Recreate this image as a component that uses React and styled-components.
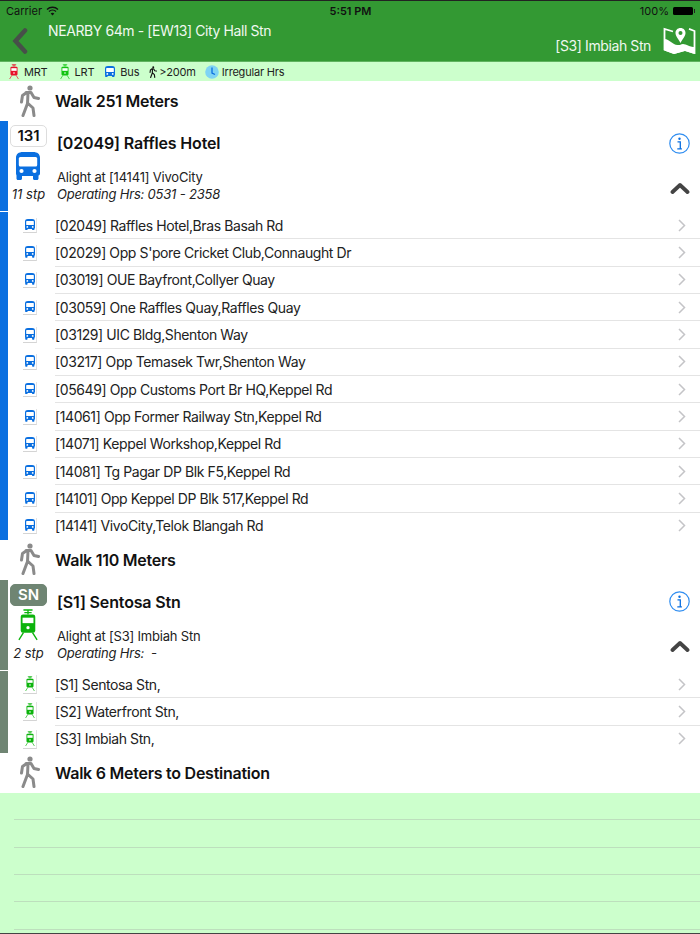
import React from 'react'
import styled, { createGlobalStyle } from 'styled-components'

const FONT = `Inter, "Liberation Sans", sans-serif`

const busStops = [
  '[02049] Raffles Hotel,Bras Basah Rd',
  "[02029] Opp S'pore Cricket Club,Connaught Dr",
  '[03019] OUE Bayfront,Collyer Quay',
  '[03059] One Raffles Quay,Raffles Quay',
  '[03129] UIC Bldg,Shenton Way',
  '[03217] Opp Temasek Twr,Shenton Way',
  '[05649] Opp Customs Port Br HQ,Keppel Rd',
  '[14061] Opp Former Railway Stn,Keppel Rd',
  '[14071] Keppel Workshop,Keppel Rd',
  '[14081] Tg Pagar DP Blk F5,Keppel Rd',
  '[14101] Opp Keppel DP Blk 517,Keppel Rd',
  '[14141] VivoCity,Telok Blangah Rd',
]

const trainStops = ['[S1] Sentosa Stn,', '[S2] Waterfront Stn,', '[S3] Imbiah Stn,']

const BusIcon = ({ size = 14, color = '#0a6fe0' }) => (
  <svg width={size} height={(size * 28) / 24} viewBox="0 0 24 28" fill="none">
    <path
      fill={color}
      d="M7 0h10c4.500 0 7 2 7 6v15.500c0 1-.6 1.800-1.500 2V26.500c0 .8-.6 1.500-1.500 1.500h-2.500c-.9 0-1.500-.7-1.500-1.500V24H6v2.500c0 .8-.6 1.500-1.500 1.500H2c-.9 0-1.500-.7-1.500-1.500V23.500C.600 23.300 0 22.500 0 21.500V6C0 2 2.500 0 7 0z"
    />
    <rect x="2.800" y="5" width="18.400" height="9.500" rx="1.500" fill="#fff" />
    <circle cx="5.500" cy="19" r="2.100" fill="#fff" />
    <circle cx="18.500" cy="19" r="2.100" fill="#fff" />
  </svg>
)

const TrainIcon = ({ width = 20, height = 33, color = '#0cb30c' }) => (
  <svg width={width} height={height} viewBox="0 0 22 34" fill="none">
    <path d="M6 1h10M11 1v5M7 4h8" stroke={color} strokeWidth="1.5" />
    <rect x="3" y="6" width="16" height="20" rx="2.5" fill={color} />
    <rect x="5" y="9.5" width="12" height="6" fill="#fff" />
    <circle cx="11" cy="20.5" r="1.8" fill="#fff" />
    <path d="M6 26L1 34M16 26l5 8" stroke={color} strokeWidth="1.5" />
  </svg>
)

const WalkIcon = ({ size = 32, color = '#8a8a8a' }) => (
  <svg width={size * 0.75} height={size} viewBox="0 0 24 32" fill="none">
    <circle cx="14" cy="3" r="2.6" fill={color} />
    <path
      d="M10 7.500h5l3 5 4.500 1M10 8L6.500 10.500 5.500 17M12 8l-.5 10.500L7 30.500M11.500 18l5.500 5 1 7.500"
      stroke={color}
      strokeWidth="3"
      strokeLinecap="round"
      strokeLinejoin="round"
    />
  </svg>
)

const InfoIcon = () => (
  <svg width="21" height="21" viewBox="0 0 21 21" fill="none">
    <circle cx="10.5" cy="10.5" r="9.7" stroke="#2f8df0" strokeWidth="1.2" />
    <circle cx="10.5" cy="5.8" r="1.2" fill="#0a6fe0" />
    <path d="M8.5 8.800h2.800v6.700M8.300 15.800h4.600" stroke="#0a6fe0" strokeWidth="1.3" />
  </svg>
)

const Chevron = () => (
  <svg width="8" height="13" viewBox="0 0 8 13" fill="none">
    <path d="M1 1l5.500 5.500L1 12" stroke="#c4c4c7" strokeWidth="1.5" />
  </svg>
)

const CollapseArrow = () => (
  <svg width="20" height="12" viewBox="0 0 20 12" fill="none">
    <path d="M2.500 10l7.500-7 7.500 7" stroke="#444" strokeWidth="3.8" strokeLinecap="round" strokeLinejoin="round" />
  </svg>
)

const BackArrow = () => (
  <svg width="16" height="26" viewBox="0 0 16 26" fill="none">
    <path d="M13 2.500L3.500 13 13 23.500" stroke="#474f49" strokeWidth="4.5" strokeLinecap="round" />
  </svg>
)

const MapIcon = () => (
  <svg width="33" height="27" viewBox="0 0 33 27" fill="none">
    <path d="M10 4.500L1.500 2v20.500l9.500 3.500 11-3 9.500 3V4l-5.500-2.200" stroke="#fff" strokeWidth="1.8" />
    <path d="M1.500 12c5 0 8 6 13 6s4-2 8-.5 5 2.500 9 2.500v7l-9.500-3-11 3-9.500-3.500z" fill="#fff" />
    <path d="M17.500 1c-3 0-5 2.200-5 5 0 3 3.500 7 5 10 1.500-3 5-7 5-10 0-2.800-2-5-5-5z" fill="#fff" />
    <circle cx="17.500" cy="6" r="2" fill="#339933" />
  </svg>
)

const WifiIcon = () => (
  <svg width="13" height="10" viewBox="0 0 13 10" fill="none">
    <path d="M1 3.500c3-3 8-3 11 0M3 5.500c2-1.800 5-1.800 7 0" stroke="#111" strokeWidth="1.3" />
    <path d="M6.500 9.500L4.700 7.400c1-.8 2.600-.8 3.600 0z" fill="#111" />
  </svg>
)

const ClockIcon = () => (
  <svg width="14" height="14" viewBox="0 0 14 14" fill="none">
    <circle cx="7" cy="7" r="6.800" fill="#7fd4f4" />
    <path d="M7 2.500V8l3 1.500" stroke="#0a6fe0" strokeWidth="1.3" />
  </svg>
)

const WalkRow = ({ children }) => (
  <Walk>
    <WalkIconSlot>
      <WalkIcon />
    </WalkIconSlot>
    <WalkLabel>{children}</WalkLabel>
  </Walk>
)

const StopList = ({ stops, bar, icon }) =>
  stops.map((stop, idx) => (
    <Stop key={stop} $bar={bar}>
      <StopIcon>
        <StopTile>{icon}</StopTile>
      </StopIcon>
      <StopBody $last={idx === stops.length - 1}>
        <StopName>{stop}</StopName>
        <Chevron />
      </StopBody>
    </Stop>
  ))

const Leg = ({ bar, badge, badgeDark, icon, steps, title, alight, hours }) => (
  <LegCard $bar={bar}>
    <LegSide>
      <Badge $dark={badgeDark}>{badge}</Badge>
      <LegIcon>{icon}</LegIcon>
      <Steps>{steps}</Steps>
    </LegSide>
    <LegMain>
      <LegTitleRow>
        <LegTitle>{title}</LegTitle>
        <InfoIcon />
      </LegTitleRow>
      <LegInfoRow>
        <div>
          <Alight>{alight}</Alight>
          <Hours>{hours}</Hours>
        </div>
        <ArrowSlot>
          <CollapseArrow />
        </ArrowSlot>
      </LegInfoRow>
    </LegMain>
  </LegCard>
)

const App = () => {
  return (
    <>
      <GlobalStyle />
      <Page>
        <Header>
          <StatusBar>
            <Carrier>
              Carrier <WifiIcon />
            </Carrier>
            <Clock>5:51 PM</Clock>
            <Battery>
              100%
              <BatteryBody />
            </Battery>
          </StatusBar>
          <NavBar>
            <BackButton>
              <BackArrow />
            </BackButton>
            <NavTitle>NEARBY 64m - [EW13] City Hall Stn</NavTitle>
            <NavRight>
              <Destination>[S3] Imbiah Stn</Destination>
              <MapIcon />
            </NavRight>
          </NavBar>
        </Header>
        <Legend>
          <LegendItem $after={3}>
            <TrainIcon width={10} height={15} color="#e8102a" /> MRT
          </LegendItem>
          <LegendItem $after={2}>
            <TrainIcon width={10} height={15} color="#12c412" /> LRT
          </LegendItem>
          <LegendItem>
            <BusIcon size={10} /> Bus
          </LegendItem>
          <LegendItem $gap={2}>
            <WalkIcon size={12} color="#111" /> &gt;200m
          </LegendItem>
          <LegendItem $gap={3}>
            <ClockIcon /> Irregular Hrs
          </LegendItem>
        </Legend>
        <WalkRow>Walk 251 Meters</WalkRow>
        <Leg
          bar="#0a6fe0"
          badge="131"
          icon={<BusIcon size={24} />}
          steps="11 stp"
          title="[02049] Raffles Hotel"
          alight="Alight at [14141] VivoCity"
          hours="Operating Hrs: 0531 - 2358"
        />
        <StopList stops={busStops} bar="#0a6fe0" icon={<BusIcon size={10} />} />
        <WalkRow>Walk 110 Meters</WalkRow>
        <Leg
          bar="#6f8573"
          badge="SN"
          badgeDark
          icon={<TrainIcon />}
          steps="2 stp"
          title="[S1] Sentosa Stn"
          alight="Alight at [S3] Imbiah Stn"
          hours="Operating Hrs:  -"
        />
        <StopList stops={trainStops} bar="#6f8573" icon={<TrainIcon width={10} height={15} />} />
        <WalkRow>Walk 6 Meters to Destination</WalkRow>
        <EmptyArea>
          {[0, 1, 2, 3, 4].map((n) => (
            <EmptyRow key={n} />
          ))}
        </EmptyArea>
      </Page>
    </>
  )
}

const GlobalStyle = createGlobalStyle`
  html, body {
    margin: 0;
    padding: 0;
    background: #ccffcc;
  }
`

const Page = styled.div`
  display: flex;
  flex-direction: column;
  width: 700px;
  height: 934px;
  overflow: hidden;
  background: #fff;
  border-bottom: 1px solid #444;
  box-sizing: border-box;
  font-family: ${FONT};
  color: #111;
`

const Header = styled.header`
  height: 61px;
  flex: none;
  background: #339933;
  border-top: 1px solid #222;
  box-sizing: border-box;
`

const StatusBar = styled.div`
  display: grid;
  grid-template-columns: 1fr auto 1fr;
  align-items: center;
  height: 19px;
  padding: 0 5px 0 6px;
  font-size: 11px;
  color: #111;
`

const Carrier = styled.div`
  display: flex;
  align-items: center;
  gap: 4px;
`

const Clock = styled.div`
  font-weight: 600;
`

const Battery = styled.div`
  display: flex;
  align-items: center;
  justify-content: flex-end;
  gap: 4px;
`

const BatteryBody = styled.span`
  position: relative;
  width: 20px;
  height: 8px;
  margin-right: 2px;
  background: #000;
  border-radius: 1.5px;

  &::after {
    content: '';
    position: absolute;
    right: -2px;
    top: 2px;
    width: 1.5px;
    height: 4px;
    background: #222;
  }
`

const NavBar = styled.div`
  display: flex;
  height: 41px;
`

const BackButton = styled.div`
  width: 48px;
  flex: none;
  padding: 8px 0 0 12px;
  box-sizing: border-box;
`

const NavTitle = styled.div`
  padding-top: 2px;
  font-size: 14px;
  letter-spacing: -0.4px;
  color: #f0f8f0;
`

const NavRight = styled.div`
  display: flex;
  align-items: flex-end;
  gap: 12px;
  margin-left: auto;
  padding: 0 4px 7px 0;
`

const Destination = styled.div`
  font-size: 14px;
  line-height: 17px;
  letter-spacing: -0.4px;
  color: #f0f8f0;
`

const Legend = styled.div`
  display: flex;
  align-items: center;
  gap: 9px;
  height: 20px;
  flex: none;
  padding-left: 9px;
  background: #ccffcc;
  border-top: 1px solid #5fb35f;
  box-sizing: border-box;
  font-size: 11px;
  letter-spacing: -0.2px;
  color: #222;
`

const LegendItem = styled.div`
  display: flex;
  align-items: center;
  gap: ${(p) => p.$gap ?? 5}px;
  margin-right: ${(p) => p.$after || 0}px;
`

const Walk = styled.div`
  display: flex;
  align-items: center;
  height: 40px;
  flex: none;
`

const WalkIconSlot = styled.div`
  display: flex;
  justify-content: center;
  width: 55px;
  flex: none;
  padding-bottom: 1px;
  box-sizing: border-box;
`

const WalkLabel = styled.div`
  font-size: 16px;
  font-weight: 600;
  letter-spacing: -0.25px;
  color: #111;
`

const LegCard = styled.div`
  display: flex;
  height: 90px;
  margin-bottom: 1px;
  flex: none;
  border-left: 8px solid ${(p) => p.$bar};
  box-sizing: border-box;
`

const LegSide = styled.div`
  display: flex;
  flex-direction: column;
  align-items: center;
  width: 41px;
  flex: none;
  padding-top: 4px;
  box-sizing: border-box;
`

const Badge = styled.div`
  width: 37px;
  height: 22px;
  flex: none;
  border: 1px solid ${(p) => (p.$dark ? '#6f8573' : '#ddd')};
  border-radius: 5px;
  background: ${(p) => (p.$dark ? '#6f8573' : '#fff')};
  box-sizing: border-box;
  color: ${(p) => (p.$dark ? '#fff' : '#111')};
  font-size: 15px;
  font-weight: 600;
  line-height: 20px;
  text-align: center;
`

const LegIcon = styled.div`
  display: flex;
  justify-content: center;
  align-items: center;
  height: 34px;
  margin-top: 2px;
  padding-right: 2px;
`

const Steps = styled.div`
  margin-top: 3px;
  font-size: 13px;
  font-style: italic;
  white-space: nowrap;
  color: #222;
`

const LegMain = styled.div`
  flex: 1;
  padding: 0 10px 0 8px;
`

const LegTitleRow = styled.div`
  display: flex;
  align-items: center;
  justify-content: space-between;
  height: 44px;
`

const LegTitle = styled.div`
  font-size: 16px;
  font-weight: 600;
  letter-spacing: -0.15px;
  color: #111;
`

const LegInfoRow = styled.div`
  display: flex;
  align-items: center;
  justify-content: space-between;
  margin-top: 4px;
`

const ArrowSlot = styled.div`
  margin-top: 3px;
`

const Alight = styled.div`
  font-size: 13px;
  line-height: 17px;
  letter-spacing: -0.2px;
  color: #222;
`

const Hours = styled.div`
  font-size: 13px;
  line-height: 17px;
  font-style: italic;
  letter-spacing: -0.2px;
  white-space: pre;
  color: #222;
`

const Stop = styled.div`
  display: flex;
  height: 27.33px;
  flex: none;
  border-left: 8px solid ${(p) => p.$bar};
  box-sizing: border-box;
`

const StopIcon = styled.div`
  display: flex;
  align-items: center;
  justify-content: center;
  width: 30px;
  margin-left: 7px;
  flex: none;
`

const StopTile = styled.div`
  display: flex;
  justify-content: center;
  width: 13px;
  padding: 1px 0 2px;
  border-right: 1px solid #e2e2e2;
  border-bottom: 1px solid #d4d4d4;
`

const StopBody = styled.div`
  display: flex;
  align-items: center;
  justify-content: space-between;
  flex: 1;
  margin-left: 10px;
  padding-right: 14px;
  border-bottom: 1px solid ${(p) => (p.$last ? 'transparent' : '#e4e4e4')};
`

const StopName = styled.div`
  font-size: 14px;
  letter-spacing: -0.4px;
  color: #222;
`

const EmptyArea = styled.div`
  flex: 1;
  background: #ccffcc;
`

const EmptyRow = styled.div`
  height: 27.33px;
  margin-left: 14px;
  border-bottom: 1px solid #bddfbd;
  box-sizing: border-box;
`

export default App
